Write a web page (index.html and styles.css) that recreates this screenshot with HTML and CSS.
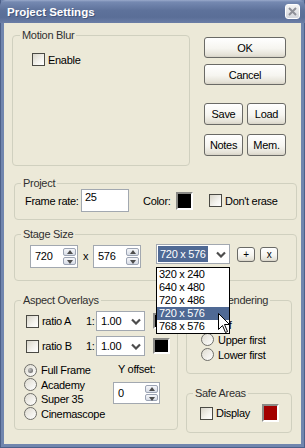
FILE: index.html
```html
<!DOCTYPE html>
<html lang="en">
<head>
    <meta charset="UTF-8">
    <meta name="viewport" content="width=device-width, initial-scale=1.0">
    <title>Project Settings</title>
    <link rel="stylesheet" href="styles.css">
</head>
<body>

<div class="window">
    <div class="titlebar">
        <span class="title">Project Settings</span>
        <span class="close-btn">
            <svg width="9" height="9" viewBox="0 0 9 9"><path d="M1 1 L8 8 M8 1 L1 8" stroke="#8e9098" stroke-width="2"/></svg>
        </span>
    </div>

    <div class="client">
        <div class="top-row">
            <div class="group motion">
                <div class="caption">Motion Blur</div>
                <label class="check"><span class="box"></span>Enable</label>
            </div>

            <div class="actions">
                <button class="btn">OK</button>
                <button class="btn cancel">Cancel</button>
                <div class="pair first-pair">
                    <button class="btn small">Save</button>
                    <button class="btn small">Load</button>
                </div>
                <div class="pair">
                    <button class="btn small">Notes</button>
                    <button class="btn small">Mem.</button>
                </div>
            </div>
        </div>

        <!-- Project -->
        <div class="group project">
            <div class="caption">Project</div>
            <div class="row">
                <span class="frame-label">Frame rate:</span>
                <div class="text-field frame-rate">25</div>
                <span class="color-label">Color:</span>
                <span class="swatch black"></span>
                <label class="check erase"><span class="box"></span>Don't erase</label>
            </div>
        </div>

        <!-- Stage Size -->
        <div class="group stage">
            <div class="caption">Stage Size</div>
            <div class="row top">
                <div class="spin-field">
                    <span class="value">720</span>
                    <span class="spinner"><span class="spin-up"></span><span class="spin-down"></span></span>
                </div>
                <span class="times">x</span>
                <div class="spin-field">
                    <span class="value">576</span>
                    <span class="spinner"><span class="spin-up"></span><span class="spin-down"></span></span>
                </div>
                <div class="combo size-combo">
                    <span class="combo-text selected">720 x 576</span>
                    <span class="combo-arrow"><svg width="10" height="7" viewBox="0 0 10 7"><path d="M1 1.5 L5 5.5 L9 1.5" fill="none" stroke="#4d4d4d" stroke-width="2.2"/></svg></span>
                    <div class="dropdown-list">
                        <div class="option">320 x 240</div>
                        <div class="option">640 x 480</div>
                        <div class="option">720 x 486</div>
                        <div class="option active">720 x 576</div>
                        <div class="option">768 x 576</div>
                        <svg class="cursor" width="13" height="21" viewBox="0 0 13 21"><path d="M0.5 0.5 L0.5 16.5 L4.5 12.5 L7.5 19.5 L9.5 18.5 L6.5 11.5 L11.5 11.5 Z" fill="#fff" stroke="#000" stroke-width="1"/></svg>
                    </div>
                </div>
                <button class="btn tiny">+</button>
                <button class="btn tiny">x</button>
            </div>
        </div>

        <div class="bottom-row">
            <!-- Aspect Overlays -->
            <div class="group aspect">
                <div class="caption">Aspect Overlays</div>
                <div class="ratio-row">
                    <label class="check ratio"><span class="box"></span>ratio A</label>
                    <span class="one">1:</span>
                    <div class="combo ratio-combo">
                        <span class="combo-text">1.00</span>
                        <span class="combo-arrow"><svg width="10" height="7" viewBox="0 0 10 7"><path d="M1 1.5 L5 5.5 L9 1.5" fill="none" stroke="#4d4d4d" stroke-width="2.2"/></svg></span>
                    </div>
                    <span class="swatch black small-swatch"></span>
                </div>
                <div class="ratio-row second">
                    <label class="check ratio"><span class="box"></span>ratio B</label>
                    <span class="one">1:</span>
                    <div class="combo ratio-combo">
                        <span class="combo-text">1.00</span>
                        <span class="combo-arrow"><svg width="10" height="7" viewBox="0 0 10 7"><path d="M1 1.5 L5 5.5 L9 1.5" fill="none" stroke="#4d4d4d" stroke-width="2.2"/></svg></span>
                    </div>
                    <span class="swatch black small-swatch"></span>
                </div>
                <div class="overlay-options">
                    <div class="radios">
                        <label class="radio"><span class="dot checked"></span>Full Frame</label>
                        <label class="radio"><span class="dot"></span>Academy</label>
                        <label class="radio"><span class="dot"></span>Super 35</label>
                        <label class="radio"><span class="dot"></span>Cinemascope</label>
                    </div>
                    <div class="yoffset">
                        <span class="y-label">Y offset:</span>
                        <div class="spin-field y-field">
                            <span class="value">0</span>
                            <span class="spinner"><span class="spin-up"></span><span class="spin-down"></span></span>
                        </div>
                    </div>
                </div>
            </div>

            <div class="right-col">
                <div class="group rendering">
                    <div class="caption">Field Rendering</div>
                    <label class="radio tall"><span class="dot checked"></span>Off</label>
                    <label class="radio tall"><span class="dot"></span>Upper first</label>
                    <label class="radio tall"><span class="dot"></span>Lower first</label>
                </div>

                <div class="group safe">
                    <div class="caption">Safe Areas</div>
                    <div class="row safe-row">
                        <label class="check"><span class="box"></span>Display</label>
                        <span class="swatch red"></span>
                    </div>
                </div>
            </div>
        </div>
    </div>
</div>

</body>
</html>
```

FILE: styles.css
```css
* {
    box-sizing: border-box;
}

body {
    margin: 0;
    font-family: "Liberation Sans", Arial, sans-serif;
    font-size: 11px;
    letter-spacing: -0.3px;
    color: #000;
}

.window {
    width: 305px;
    height: 448px;
    display: flex;
    flex-direction: column;
    padding: 0 4px 4px;
    background: #7186ae;
    box-shadow: inset 1px 0 #4d6089, inset -1px 0 #4d6089, inset 0 -1px #4d6089;
}

.titlebar {
    height: 23px;
    margin: 0 -4px;
    padding: 0 5px 0 7px;
    display: flex;
    align-items: center;
    justify-content: space-between;
    border-radius: 6px 6px 0 0;
    background: linear-gradient(#9aaacb 0, #7589b1 2px, #5e729b 45%, #5a6e97 75%, #6b7ea6 100%);
}

.title {
    color: #fff;
    font-weight: bold;
    font-size: 11.5px;
    letter-spacing: 0;
    text-shadow: 1px 1px 0 #44557a;
}

.close-btn {
    width: 15px;
    height: 15px;
    display: flex;
    align-items: center;
    justify-content: center;
    border: 1px solid #fff;
    border-radius: 3px;
    background: linear-gradient(#f4f4f4, #d3d6dc);
}

.client {
    flex: 1;
    position: relative;
    background: #ece9d8;
}

/* group boxes */
.group {
    border: 1px solid #d0d0bf;
    border-radius: 4px;
}

.caption {
    display: table;
    margin: -7px 0 0 6px;
    padding: 0 2px;
    line-height: 12px;
    color: #303030;
    white-space: nowrap;
    background: #ece9d8;
}

.row {
    display: flex;
    align-items: center;
    white-space: nowrap;
}

.row.top {
    align-items: flex-start;
}

/* checkboxes and radios */
.check, .radio {
    display: flex;
    align-items: center;
    white-space: nowrap;
}

.box {
    width: 13px;
    height: 13px;
    margin-right: 3px;
    border: 1px solid #4a4a44;
    background: linear-gradient(135deg, #d8d5c9, #f4f3ee 60%, #fff);
}

.dot {
    width: 13px;
    height: 13px;
    margin-right: 4px;
    border: 1px solid #6f6f6a;
    border-radius: 50%;
    background: linear-gradient(135deg, #dedbd0, #fff);
    position: relative;
}

.dot.checked::after {
    content: "";
    position: absolute;
    left: 3px;
    top: 3px;
    width: 5px;
    height: 5px;
    border-radius: 50%;
    background: radial-gradient(circle at 35% 35%, #bdbdbd, #5c5c5c);
}

/* buttons */
.btn {
    height: 21px;
    padding: 0;
    font: inherit;
    letter-spacing: inherit;
    color: #000;
    border: 1px solid #6a6a66;
    border-radius: 3px;
    background: linear-gradient(#fff, #f6f5f0 55%, #e4e1d6 90%, #d6d2c6);
}

.top-row {
    display: flex;
    align-items: flex-start;
    margin-top: 12px;
}

.motion {
    width: 178px;
    height: 131px;
    margin-left: 8px;
    padding: 0 0 0 19px;
}

.motion .caption {
    margin-left: -12px;
    margin-bottom: 12px;
}

.actions {
    width: 82px;
    margin: 2px 0 0 14px;
    display: flex;
    flex-direction: column;
}

.cancel {
    margin-top: 6px;
}

.pair {
    display: flex;
    justify-content: space-between;
    margin-top: 9px;
}

.first-pair {
    margin-top: 18px;
}

.btn.small {
    width: 39px;
    height: 22px;
}

/* project */
.project {
    height: 37px;
    margin: 17px 4px 0 10px;
    padding-left: 10px;
}

.project .caption {
    margin-left: -4px;
}

.frame-label {
    width: 56px;
}

.text-field {
    width: 48px;
    height: 23px;
    padding: 1px 3px;
    line-height: 13px;
    background: #fff;
    border: 1px solid #a2a8b0;
}

.color-label {
    width: 33px;
    margin-left: 14px;
}

.swatch {
    width: 17px;
    height: 18px;
    border: 2px solid;
    border-color: #8a8a86 #fff #fff #8a8a86;
}

.swatch.black {
    background: #000;
}

.swatch.red {
    background: #a30000;
}

.erase {
    margin-left: 16px;
}

/* stage size */
.stage {
    height: 47px;
    margin: 14px 4px 0 10px;
    padding-left: 15px;
}

.stage .caption {
    margin-left: -9px;
    margin-bottom: 5px;
}

.spin-field {
    width: 48px;
    height: 23px;
    display: flex;
    justify-content: space-between;
    padding: 2px 1px 2px 4px;
    background: #fff;
    border: 1px solid #a2a8b0;
}

.spin-field .value {
    line-height: 16px;
}

.spinner {
    width: 13px;
    display: flex;
    flex-direction: column;
    gap: 1px;
}

.spin-up, .spin-down {
    height: 9px;
    border: 1px solid #9ca4b4;
    border-radius: 2px;
    background: linear-gradient(#f6f7fa, #d7dce6);
    position: relative;
}

.spin-up::after, .spin-down::after {
    content: "";
    position: absolute;
    left: 3px;
    border-left: 3px solid transparent;
    border-right: 3px solid transparent;
}

.spin-up::after {
    top: 1px;
    border-bottom: 4px solid #4d4d4d;
}

.spin-down::after {
    top: 2px;
    border-top: 4px solid #4d4d4d;
}

.times {
    width: 15px;
    text-align: center;
    line-height: 23px;
}

.combo {
    position: relative;
    display: flex;
    align-items: center;
    justify-content: space-between;
    height: 20px;
    padding: 1px;
    background: #fff;
    border: 1px solid #a2a8b0;
}

.size-combo {
    width: 74px;
    margin: -1px 0 0 15px;
}

.combo-text {
    padding: 0 2px;
    line-height: 16px;
}

.combo-text.selected {
    color: #fff;
    background: #4f6994;
}

.combo-arrow {
    width: 15px;
    height: 16px;
    display: flex;
    align-items: center;
    justify-content: center;
}

.dropdown-list {
    position: absolute;
    top: 22px;
    left: -1px;
    width: 74px;
    z-index: 10;
    background: #fff;
    border: 1px solid #000;
}

.option {
    height: 13px;
    line-height: 13px;
    padding-left: 2px;
}

.option.active {
    color: #fff;
    background: #4f6994;
}

.cursor {
    position: absolute;
    left: 61px;
    top: 45px;
}

.btn.tiny {
    width: 18px;
    height: 15px;
    margin: 2px 0 0 7px;
    font-size: 10px;
    line-height: 12px;
}

.btn.tiny + .btn.tiny {
    margin-left: 5px;
}

/* bottom */
.bottom-row {
    display: flex;
    align-items: flex-start;
    margin-top: 19px;
}

.aspect {
    width: 164px;
    height: 130px;
    margin-left: 10px;
    padding-left: 11px;
}

.aspect .caption {
    margin-left: -5px;
    margin-bottom: 5px;
}

.ratio-row {
    display: flex;
    align-items: center;
    height: 20px;
}

.ratio-row.second {
    margin-top: 5px;
}

.ratio {
    width: 60px;
}

.one {
    width: 10px;
}

.ratio-combo {
    width: 49px;
}

.ratio-combo .combo-text {
    padding-left: 3px;
}

.small-swatch {
    width: 17px;
    height: 16px;
    margin-left: 8px;
}

.overlay-options {
    display: flex;
    margin-top: 7px;
}

.radios {
    width: 89px;
    margin-left: -2px;
}

.radios .radio {
    height: 14.5px;
}

.yoffset {
    display: flex;
    flex-direction: column;
}

.y-label {
    padding-left: 5px;
    line-height: 13px;
}

.y-field {
    width: 47px;
    height: 22px;
    margin-top: 6px;
}

.right-col {
    width: 106px;
    margin-left: 8px;
    display: flex;
    flex-direction: column;
}

.rendering {
    height: 74px;
    padding-left: 14px;
}

.rendering .caption {
    margin-left: -8px;
    margin-bottom: 11px;
}

.radio.tall {
    height: 15px;
}

.safe {
    height: 40px;
    margin-top: 19px;
    padding: 0 12px 0 13px;
}

.safe .caption {
    margin-left: -7px;
    margin-bottom: 5px;
}

.safe-row {
    height: 18px;
}

.safe-row .swatch {
    margin-left: auto;
}
```
